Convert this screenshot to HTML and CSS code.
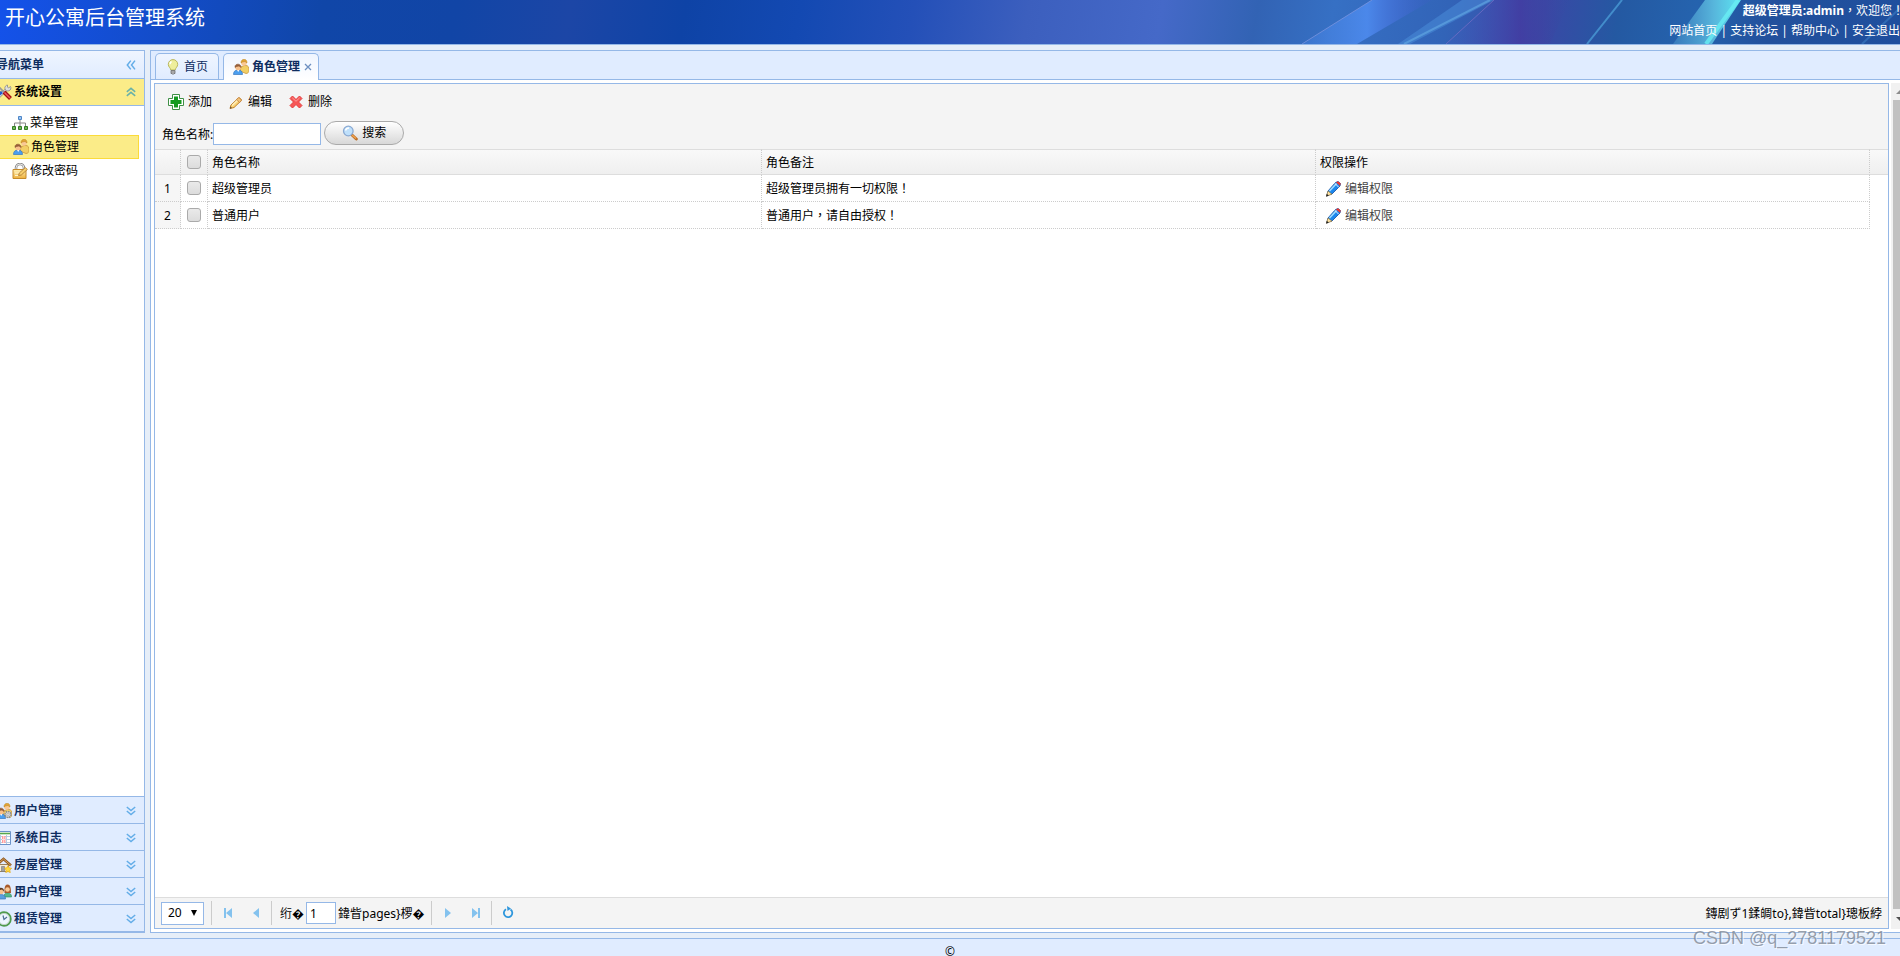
FILE: index.html
```html
<!DOCTYPE html>
<html lang="zh-CN">
<head>
<meta charset="utf-8">
<title>开心公寓后台管理系统</title>
<link rel="stylesheet" href="styles.css">
</head>
<body>
<svg class="sprite" aria-hidden="true">
  <defs>
    <linearGradient id="beamBlue" x1="0" x2="1"><stop offset="0" stop-color="#4a86e6" stop-opacity=".3"/><stop offset=".5" stop-color="#4b88ea"/><stop offset="1" stop-color="#4258cc" stop-opacity=".1"/></linearGradient>
    <linearGradient id="beamPurple" x1="0" x2="1"><stop offset="0" stop-color="#4460c0" stop-opacity=".2"/><stop offset=".6" stop-color="#4538a0" stop-opacity=".7"/><stop offset="1" stop-color="#3a48a0" stop-opacity="0"/></linearGradient>
    <linearGradient id="beamCyan" x1="0" x2="1"><stop offset="0" stop-color="#4c94cc" stop-opacity=".5"/><stop offset=".6" stop-color="#57b6dc"/><stop offset="1" stop-color="#5de6f2"/></linearGradient>
    <linearGradient id="gold" x2="0" y2="1"><stop offset="0" stop-color="#fff0b4"/><stop offset="1" stop-color="#eeb03c"/></linearGradient>
  </defs>
  <symbol id="i-bulb" viewBox="0 0 16 16"><path d="M8 .6a4.700 4.700 0 0 0-4.700 4.800c0 2.500 2.200 3.300 2.500 5.600h4.400c.3-2.300 2.500-3.100 2.500-5.600A4.700 4.700 0 0 0 8 .6z" fill="#eeee9c" stroke="#b9b75f"/><path d="M6.500 2.500c-1 .6-1.500 1.500-1.500 2.800" stroke="#fff" stroke-width="1.500" fill="none"/><path d="M6 11.500h4v3H9l-1 1-1-1H6z" fill="#a8a8a8" stroke="#6e6e6e" stroke-width=".8"/></symbol>
  <symbol id="i-group" viewBox="0 0 16 16"><path d="M7 12l1-4 3-1.500h2c2 0 3 1.500 3 4.500 0 2-1 3.500-3 3.500z" fill="#f2cf64" stroke="#c9973c" stroke-width=".8"/><circle cx="11" cy="4" r="2.800" fill="#fac995"/><path d="M8 4c-.2-5 6.300-5 6 0l-2-1.500L9.500 3z" fill="#e2a635" stroke="#b98021" stroke-width=".5"/><path d="M.5 15.500c0-3 1.500-4.500 4.500-4.500s4.500 1.500 4.500 4.500z" fill="#4b9ff0" stroke="#3777bd" stroke-width=".7"/><path d="M4 11l1.200 2 1.200-2z" fill="#fff"/><circle cx="5" cy="8.500" r="2.800" fill="#f7c08c"/><path d="M2 8.500c-.7-4.500 6.500-4.500 6 0L6 7 3.500 7.500z" fill="#9b6039" stroke="#7d4a28" stroke-width=".5"/></symbol>
  <symbol id="i-usergear" viewBox="0 0 16 16"><use href="#i-group"/><circle cx="12" cy="11.500" r="3" fill="#d4d4d4" stroke="#8b8b8b" stroke-width="1.600" stroke-dasharray="1.500 .8"/><circle cx="12" cy="11.500" r="1" fill="#fff" stroke="#888" stroke-width=".5"/></symbol>
  <symbol id="i-users" viewBox="0 0 16 16"><path d="M8 13c0-3 1-4 3.500-4s4 1 4 4z" fill="#54b78a" stroke="#2b8a60" stroke-width=".6"/><path d="M8.500 9c0-3-.5-8.500 3-8.500s3.500 5 3.500 8.500z" fill="#a85b2c"/><circle cx="11.500" cy="5.500" r="2.300" fill="#fac995"/><path d="M.5 15c0-3 1.500-4.500 4.500-4.500s4.500 1.500 4.500 4.500z" fill="#5b9ede" stroke="#3777bd" stroke-width=".7"/><circle cx="5" cy="7.500" r="2.700" fill="#f7c08c"/><path d="M2 7.500c-.7-5 6.500-5 6 0L6 5.500 3.500 6z" fill="#5c3a22"/></symbol>
  <symbol id="i-tools" viewBox="0 0 16 16"><path d="M1 14.500L11 5" stroke="#8d8d8d" stroke-width="3"/><path d="M1 14.500L11 5" stroke="#e4e4e4" stroke-width="1.500"/><path d="M14.500 2.500a3 3 0 1 1-3-1.500v2l1 1z" fill="#ddd" stroke="#888" stroke-width=".8"/><path d="M2 2l7 7" stroke="#999" stroke-width="1.600"/><path d="M8 8l6.500 6.500" stroke="#a41111" stroke-width="4"/><path d="M8.500 8.500l5.500 5.500" stroke="#f25c5c" stroke-width="1.500"/><path d="M0 13l6-5" stroke="#225bd0" stroke-width="3"/></symbol>
  <symbol id="i-tree" viewBox="0 0 16 16"><path d="M8 5v3M2.500 11V8h11v3M8 8v3" stroke="#888" fill="none"/><path d="M6.500 1.500h3v3h-3z" fill="#9ac6f6" stroke="#4f86c6"/><path d="M.5 11.500h3v3h-3zM6.500 11.500h3v3h-3zM12.500 11.500h3v3h-3z" fill="#6fba57" stroke="#357c25"/></symbol>
  <symbol id="i-lock" viewBox="0 0 16 16"><path d="M4 7V5a4 4 0 0 1 8 0v2" fill="none" stroke="#8d8d8d" stroke-width="2.600"/><path d="M4 7V5a4 4 0 0 1 8 0v2" fill="none" stroke="#e6e6e6" stroke-width="1"/><path d="M1 6.500h13v9H1z" fill="url(#gold)" stroke="#c58a2a"/><path d="M3 10h6M3 12.500h4" stroke="#fff4c8"/><path d="M6.500 12.500l.8-2.500 6-5.500 2 2-6 5.500z" fill="#f8d06c" stroke="#a8732b" stroke-width=".8"/></symbol>
  <symbol id="i-add" viewBox="0 0 16 16"><path d="M4.500.5h7v4h4v7h-4v4h-7v-4h-4v-7h4z" fill="#fff" stroke="#3f8f46" stroke-linejoin="round"/><path d="M6 2.500h4V6h3.500v4H10v3.500H6V10H2.500V6H6z" fill="#159a20"/></symbol>
  <symbol id="i-edit" viewBox="0 0 16 16"><path d="M2 14.500l1-3.500 7.500-7c1-.8 3.500 1.500 2.700 2.700L6 13.500z" fill="#fbd477" stroke="#be7d25"/><path d="M4 11.500L11 5" stroke="#fff1c2" stroke-width="1.300"/><path d="M10 4c1-1 4.200 2 3 3.200l-1.500 1.300L8.600 5.300z" fill="#f4c47a" stroke="#b97936" stroke-width=".7"/><path d="M2 14.500l.6-2 1.300 1.400z" fill="#444"/></symbol>
  <symbol id="i-del" viewBox="0 0 16 16"><path d="M2 4.500L4.500 2 8 5.500 11.500 2 14 4.500 10.500 8l3.500 3.500-2.500 2.500L8 10.500 4.500 14 2 11.500 5.500 8z" fill="#f75656" stroke="#e33e3e" stroke-linejoin="round"/><path d="M4.300 3.800L8 7.300l3.700-3.500" stroke="#ff9d9d" fill="none"/></symbol>
  <symbol id="i-search" viewBox="0 0 16 16"><path d="M10 10l4.300 4" stroke="#b96d27" stroke-width="3" stroke-linecap="round"/><path d="M10 10l4 3.500" stroke="#f1a44e" stroke-width="1.500"/><circle cx="6.300" cy="6" r="4.800" fill="#bfe0fb" stroke="#8aa9d2" stroke-width="1.300"/><path d="M3.500 5.500c.5-2 2-2.500 3.500-2.500" stroke="#fff" stroke-width="1.500" fill="none"/></symbol>
  <symbol id="i-pencil" viewBox="0 0 16 16"><path d="M2 14.500l1-4.500L10.500 1.500 13 .5l2.500 2-.5 2.500L7 13z" fill="#1b87ee" stroke="#154c9c" stroke-width=".8"/><path d="M4.500 10L11.500 2.500" stroke="#9fdcff" stroke-width="1.600"/><path d="M11 1.500l2-1.200 2.700 2.200L15 4.800z" fill="#f0362c"/><path d="M10 2.500l3.800 3.800" stroke="#e8eefc"/><path d="M1.500 15l1.500-5 4 3.200z" fill="#ffe3a2" stroke="#8c6b30" stroke-width=".6"/><path d="M1 15.800l.8-3 2 2z" fill="#222"/></symbol>
  <symbol id="i-log" viewBox="0 0 16 16"><path d="M.5 1.500h14v13H.5z" fill="#fff" stroke="#6b93c9"/><path d="M1 3.500h13" stroke="#57a84e" stroke-width="1.600"/><path d="M1 6.500h13M1 9.500h13M1 12.500h13M4.500 5v9M10.500 5v9" stroke="#b8cbe2"/><path d="M6 6h3.500v7H6z" fill="#ff9c9c"/><path d="M6 9.500h3.500M7.700 6v7" stroke="#ffdede"/></symbol>
  <symbol id="i-house" viewBox="0 0 16 16"><path d="M2.500 7.500h10v7h-10z" fill="#f6ecd7" stroke="#9d8158"/><path d="M0 8.500L7.500 2l7.500 6.500" fill="none" stroke="#915a22" stroke-width="2.600"/><path d="M0 8.500L7.500 2l7.500 6.500" fill="none" stroke="#d5a15c" stroke-width="1"/><path d="M5.500 9.500h3v5h-3z" fill="#a1a1a1" stroke="#777" stroke-width=".6"/><path d="M12 8.500l1.200 2.300 2.500.4-1.800 1.900.4 2.600-2.300-1.200-2.300 1.200.4-2.600-1.800-1.900 2.500-.4z" fill="#ffd83d" stroke="#e2a414" stroke-width=".6"/></symbol>
  <symbol id="i-clock" viewBox="0 0 16 16"><circle cx="8" cy="8" r="6.800" fill="#fff" stroke="#4f9b4d" stroke-width="1.800"/><circle cx="8" cy="8" r="5.600" fill="#eef6ff" stroke="#a9c2b0" stroke-width=".7"/><path d="M7 4.500l1 4L11 6" fill="none" stroke="#4d6f93" stroke-width="1.200"/></symbol>
  <symbol id="i-down" viewBox="0 0 10 10"><path d="M.8 1L5 4.500 9.200 1M.8 5L5 8.500 9.200 5" fill="none" stroke="#63ade8" stroke-width="1.500"/></symbol>
  <symbol id="i-up" viewBox="0 0 10 10"><path d="M.8 4.800L5 1.300l4.200 3.500M.8 8.800L5 5.300l4.200 3.500" fill="none" stroke="#69b2a8" stroke-width="1.500"/></symbol>
  <symbol id="i-left" viewBox="0 0 10 10"><path d="M4.800.6L1.300 5l3.500 4.400M9 .6L5.500 5 9 9.400" fill="none" stroke="#63ade8" stroke-width="1.500"/></symbol>
</svg>

<header class="banner">
  <svg class="beams" viewBox="0 0 1900 44" preserveAspectRatio="none" aria-hidden="true">
    <path d="M1302 44L1372 0h60l-75 44z" fill="url(#beamBlue)"/>
    <path d="M1302 44L1372 0" stroke="#8299e2" opacity=".7"/>
    <path d="M1398 44L1462 0h32l-84 44z" fill="#4c8fdc" opacity=".5"/>
    <path d="M1404 44L1490 0" stroke="#6bb5ea" stroke-width="2" opacity=".5"/>
    <path d="M1446 44L1494 0h76l-20 44z" fill="url(#beamPurple)"/>
    <path d="M1446 44L1494 0" stroke="#7a70c8" opacity=".7"/>
    <path d="M1587 44L1622 0" stroke="#4a9bd6" stroke-width="2" opacity=".8"/>
    <path d="M1673 44L1705 0h36l-29 44z" fill="url(#beamCyan)"/>
    <path d="M1706 44L1738 0" stroke="#69eef4" stroke-width="4" opacity=".8"/>
    <path d="M1862 44L1900 8" stroke="#3f86cc" stroke-width="2" opacity=".5"/>
  </svg>
  <h1>开心公寓后台管理系统</h1>
  <div class="account">
    <p><b>超级管理员:admin</b><span class="punct" lang="zh-TW">，</span>欢迎您<span class="punct" lang="zh-TW">！</span></p>
    <nav><a href="#">网站首页</a> | <a href="#">支持论坛</a> | <a href="#">帮助中心</a> | <a href="#">安全退出</a></nav>
  </div>
</header>

<main>
  <aside class="sidebar">
    <div class="bar title"><span>导航菜单</span><button aria-label="收起"><svg><use href="#i-left"/></svg></button></div>
    <div class="bar open"><svg class="icon"><use href="#i-tools"/></svg><span>系统设置</span><button aria-label="折叠"><svg><use href="#i-up"/></svg></button></div>
    <ul class="tree">
      <li><svg class="icon"><use href="#i-tree"/></svg><a href="#">菜单管理</a></li>
      <li class="current"><svg class="icon"><use href="#i-group"/></svg><a href="#">角色管理</a></li>
      <li><svg class="icon"><use href="#i-lock"/></svg><a href="#">修改密码</a></li>
    </ul>
    <div class="bar"><svg class="icon"><use href="#i-usergear"/></svg><span>用户管理</span><button aria-label="展开"><svg><use href="#i-down"/></svg></button></div>
    <div class="bar"><svg class="icon"><use href="#i-log"/></svg><span>系统日志</span><button aria-label="展开"><svg><use href="#i-down"/></svg></button></div>
    <div class="bar"><svg class="icon"><use href="#i-house"/></svg><span>房屋管理</span><button aria-label="展开"><svg><use href="#i-down"/></svg></button></div>
    <div class="bar"><svg class="icon"><use href="#i-users"/></svg><span>用户管理</span><button aria-label="展开"><svg><use href="#i-down"/></svg></button></div>
    <div class="bar"><svg class="icon"><use href="#i-clock"/></svg><span>租赁管理</span><button aria-label="展开"><svg><use href="#i-down"/></svg></button></div>
  </aside>

  <section class="center">
    <div class="tabs">
      <button class="tab"><svg class="icon"><use href="#i-bulb"/></svg>首页</button>
      <button class="tab active"><svg class="icon"><use href="#i-group"/></svg>角色管理<svg class="close" viewBox="0 0 8 8"><path d="M1 1l6 6M7 1L1 7" stroke="#6d8fc0" stroke-width="1.300"/></svg></button>
    </div>
    <div class="content">
      <div class="panel">
        <div class="toolbar">
          <div class="actions">
            <button><svg class="icon"><use href="#i-add"/></svg>添加</button>
            <button><svg class="icon"><use href="#i-edit"/></svg>编辑</button>
            <button><svg class="icon"><use href="#i-del"/></svg>删除</button>
          </div>
          <form class="search">
            <label for="role">角色名称:</label><input id="role" type="text">
            <button type="button"><svg class="icon"><use href="#i-search"/></svg>搜索</button>
          </form>
        </div>
        <div class="grid">
          <table>
            <colgroup><col class="c-num"><col class="c-check"><col><col><col><col class="c-fill"></colgroup>
            <thead>
              <tr><th></th><th><input type="checkbox" aria-label="全选"></th><th>角色名称</th><th>角色备注</th><th>权限操作</th><th></th></tr>
            </thead>
            <tbody>
              <tr><td>1</td><td><input type="checkbox" aria-label="选择第1行"></td><td>超级管理员</td><td>超级管理员拥有一切权限<span class="punct" lang="zh-TW">！</span></td><td><a class="perm" href="#"><svg class="icon"><use href="#i-pencil"/></svg>编辑权限</a></td><td></td></tr>
              <tr><td>2</td><td><input type="checkbox" aria-label="选择第2行"></td><td>普通用户</td><td>普通用户<span class="punct" lang="zh-TW">，</span>请自由授权<span class="punct" lang="zh-TW">！</span></td><td><a class="perm" href="#"><svg class="icon"><use href="#i-pencil"/></svg>编辑权限</a></td><td></td></tr>
            </tbody>
          </table>
        </div>
        <div class="pager">
          <div class="size"><select aria-label="每页条数"><option>20</option></select></div>
          <i class="sep"></i>
          <button aria-label="第一页"><svg viewBox="0 0 16 16"><path d="M4 3h2v10H4zM12 3v10L6 8z"/></svg></button>
          <button aria-label="上一页"><svg viewBox="0 0 16 16"><path d="M11 3v10L5 8z"/></svg></button>
          <i class="sep"></i>
          <label for="page">绗�</label><input id="page" type="text" value="1"><span>鍏眥pages}椤�</span>
          <i class="sep"></i>
          <button aria-label="下一页"><svg viewBox="0 0 16 16"><path d="M5 3v10l6-5z"/></svg></button>
          <button aria-label="最后一页"><svg viewBox="0 0 16 16"><path d="M10 3h2v10h-2zM4 3v10l6-5z"/></svg></button>
          <i class="sep"></i>
          <button aria-label="刷新"><svg viewBox="0 0 16 16"><path d="M10.500 4.500A4.200 4.200 0 1 1 6 4.300" fill="none" stroke="#2e96dc" stroke-width="1.800"/><path d="M7 1l4 2.500L7.500 6z" fill="#2e96dc"/></svg></button>
          <span class="info">鏄剧ず1鍒皗to},鍏眥total}璁板綍</span>
        </div>
      </div>
      <div class="scroll" aria-hidden="true"><i class="arrow up"></i><i class="thumb"></i><i class="arrow down"></i></div>
    </div>
  </section>
</main>

<footer>©</footer>
<div class="watermark">CSDN @q_2781179521</div>
</body>
</html>
```
FILE: styles.css
```css
* { box-sizing: border-box; }

html, body { height: 100%; }

body {
  margin: 0;
  display: flex;
  flex-direction: column;
  overflow: hidden;
  position: relative;
  background: #e6eef8;
  color: #000;
  font: 12px/18px "Noto Sans", "Noto Sans CJK SC", sans-serif;
}

button, input, select { font: inherit; color: inherit; margin: 0; }
button { border: 0; padding: 0; background: none; }
a { color: inherit; text-decoration: none; }
p, h1, ul { margin: 0; padding: 0; }

.sprite { position: absolute; width: 0; height: 0; }
.icon { width: 16px; height: 16px; flex: none; }
.punct { font-family: "Noto Sans CJK TC", sans-serif; line-height: 1; }

/* banner */
.banner {
  position: relative;
  flex: none;
  display: flex;
  justify-content: space-between;
  height: 45px;
  overflow: hidden;
  border-bottom: 1px solid #95b8e7;
  color: #fff;
  background: linear-gradient(100deg, #1452ea 0%, #134cc8 9%, #1046a8 17%, #1145a6 24%, #1c46a6 30%, #0e43a6 36%, #1349b2 42%, #2450b8 48%, #3c5fbe 54%, #4569c8 61%, #3263b4 66%, #3670c4 70%, #3264b8 76%, #3a48a6 81%, #2459a2 85%, #2563ae 89%, #22509c 93%, #1f4f9e 100%);
}
.beams { position: absolute; inset: 0; width: 100%; height: 100%; }
.banner h1 { position: relative; padding: 3px 5px; font-size: 20px; line-height: 30px; font-weight: 400; }
.account { position: relative; flex: none; margin-right: -4px; padding-top: 1px; text-align: right; line-height: 20px; white-space: nowrap; }
.account nav { padding-right: 4px; }

/* frame */
main { flex: 1; min-height: 0; display: flex; gap: 5px; padding: 5px 0; }

.sidebar {
  flex: none;
  width: 155px;
  margin-left: -10px;
  display: flex;
  flex-direction: column;
  border: 1px solid #95b8e7;
  background: #fff;
}
.bar {
  flex: none;
  display: flex;
  align-items: center;
  gap: 2px;
  height: 27px;
  padding: 1px 8px 0 5px;
  border-top: 1px solid #95b8e7;
  background: #e0ecff;
  color: #0e2d5f;
  font-weight: 700;
}
.bar span { flex: 1; }
.bar button, .bar button svg { display: block; width: 10px; height: 10px; }
.bar.title { border-top: 0; padding-top: 0; background: linear-gradient(#eff5ff, #e0ecff); }
.bar.open { height: 28px; padding-top: 0; border-bottom: 1px solid #95b8e7; background: #fbec88; color: #000; }
.bar:last-child { height: 28px; border-bottom: 1px solid #95b8e7; }

.tree { flex: 1; padding: 5px; list-style: none; }
.tree li { display: flex; align-items: center; gap: 2px; height: 24px; padding-left: 16px; }
.tree .current { border: 1px solid #fbdb3a; background: #fbec88; }

.center {
  flex: 1;
  min-width: 0;
  margin-right: -10px;
  display: flex;
  flex-direction: column;
  border: 1px solid #95b8e7;
  background: #fff;
}

/* tabs */
.tabs { flex: none; display: flex; gap: 4px; height: 29px; padding: 2px 4px 0; border-bottom: 1px solid #95b8e7; background: #e0ecff; }
.tab {
  display: flex;
  align-items: center;
  gap: 2px;
  height: 26px;
  padding: 0 10px 0 9px;
  border: 1px solid #95b8e7;
  border-bottom: 0;
  border-radius: 5px 5px 0 0;
  background: linear-gradient(#eff5ff, #e0ecff);
  color: #0e2d5f;
}
.tab .icon { margin-right: 1px; }
.tab.active { height: 27px; padding: 0 6px 0 9px; background: linear-gradient(#eff5ff, #fff); font-weight: 700; }
.close { width: 8px; height: 8px; margin-left: 2px; }

.content { flex: 1; min-height: 0; display: flex; gap: 2px; padding: 3px 0 3px 3px; }
.panel { flex: 1; min-width: 0; display: flex; flex-direction: column; border: 1px solid #95b8e7; }

.scroll { flex: none; width: 18px; display: flex; flex-direction: column; align-items: center; background: #f1f1f1; }
.thumb { flex: 1; width: 15px; background: #c1c1c1; }
.arrow { height: 17px; display: flex; align-items: center; }
.arrow.down { height: 20px; }
.arrow::before { content: ""; border: 4px solid transparent; }
.arrow.up::before { border-top: 0; border-bottom-color: #8c8c8c; }
.arrow.down::before { border-bottom: 0; border-top-color: #505050; }

/* toolbar */
.toolbar { flex: none; height: 65px; padding: 6px 7px 0; background: #f4f4f4; }
.actions { display: flex; gap: 16px; padding-left: 6px; height: 24px; }
.actions button { display: flex; align-items: center; gap: 4px; }
.search { display: flex; align-items: center; gap: 3px; padding-top: 9px; }
.search label { margin-right: -3px; padding-top: 1px; }
.search input { width: 108px; height: 22px; padding: 0 3px; border: 1px solid #95b8e7; background: #fff; }
.search button {
  display: flex;
  align-items: center;
  justify-content: center;
  gap: 4px;
  width: 80px;
  height: 24px;
  margin-top: -3px;
  border: 1px solid #aaa;
  border-radius: 12px;
  background: linear-gradient(#fff, #d8d8d8);
}

/* grid */
.grid { flex: 1; min-height: 0; background: #fff; }
table { width: 100%; table-layout: fixed; border-collapse: separate; border-spacing: 0; }
.c-num { width: 26px; }
.c-check { width: 27px; }
.c-fill { width: 18px; }
th, td { padding: 1px 4px 0; text-align: left; font-weight: 400; border-right: 1px dotted #ccc; }
th { height: 26px; border-top: 1px solid #ddd; border-bottom: 1px solid #ddd; background: linear-gradient(#f9f9f9, #efefef); }
td { height: 27px; border-bottom: 1px dotted #ccc; }
th:last-child { border-right: 0; }
td:last-child { border: 0; }
td:first-child { padding: 1px 0 0; text-align: center; background: #f6f6f6; }
th:nth-child(2), td:nth-child(2) { padding: 0 6px; }
input[type="checkbox"] {
  appearance: none;
  display: block;
  width: 14px;
  height: 14px;
  border: 1px solid #aaa;
  border-radius: 3px;
  background: linear-gradient(#eaeaea, #dcdcdc);
}
.perm { display: flex; align-items: center; gap: 4px; padding-left: 5px; color: #444; }

/* pager */
.pager { flex: none; display: flex; align-items: center; height: 31px; padding: 0 6px; border-top: 1px solid #ddd; background: #f4f4f4; }
.size { position: relative; display: flex; margin-right: 7px; }
.size::after { content: ""; position: absolute; right: 7px; top: 8px; border: 3px solid transparent; border-top: 6px solid #000; border-bottom: 0; pointer-events: none; }
.size select { appearance: none; width: 43px; height: 23px; padding: 0 6px; border: 1px solid #95b8e7; border-radius: 0; background: #fff; }
.sep { width: 1px; height: 24px; background: #ccc; }
.pager button { width: 16px; height: 16px; margin: 0 4px 0 8px; }
.pager button svg { display: block; width: 16px; height: 16px; fill: #84c2ee; }
.pager button + .sep { margin-left: 3px; }
.pager label { margin-left: 8px; }
.pager label, .pager span { padding-top: 1px; }
.pager input { width: 30px; height: 22px; margin: 0 2px; padding: 0 3px; border: 1px solid #95b8e7; background: #fff; }
.pager span + .sep { margin-left: 6px; }
.pager .info { margin-left: auto; }

footer { flex: none; height: 18px; padding-top: 5px; border-top: 1px solid #95b8e7; background: #e0ecff; text-align: center; line-height: 16px; }

.watermark {
  position: absolute;
  right: 14px;
  bottom: 8px;
  font: 18px/20px "Liberation Sans", sans-serif;
  color: rgba(120, 130, 145, .75);
  text-shadow: 1px 1px 0 rgba(255, 255, 255, .7);
}
```
